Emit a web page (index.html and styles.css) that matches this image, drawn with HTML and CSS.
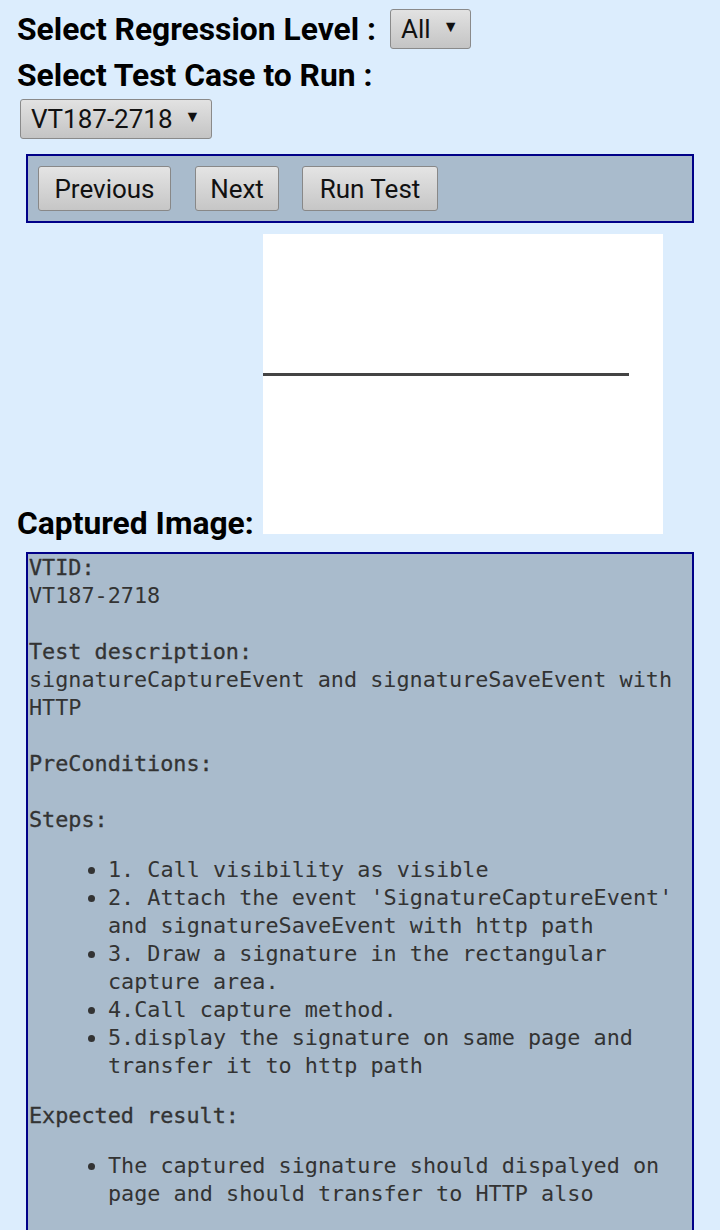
FILE: index.html
```html
<!DOCTYPE html>
<html>
<head>
<meta charset="utf-8">
<link rel="stylesheet" href="styles.css">
</head>
<body>
<div class="page">
  <div class="row-level">
    <span class="heading">Select Regression Level :</span>
    <span class="select select-all"><span>All</span><span class="arrow">▼</span></span>
  </div>
  <div class="heading heading-case">Select Test Case to Run :</div>
  <div class="select-row">
    <span class="select select-case"><span>VT187-2718</span><span class="arrow">▼</span></span>
  </div>
  <div class="panel">
    <span class="btn btn-prev">Previous</span>
    <span class="btn btn-next">Next</span>
    <span class="btn btn-run">Run Test</span>
  </div>
  <div class="capture-row">
    <span class="heading capture-label">Captured Image:</span>
    <div class="canvas"><div class="sig-line"></div></div>
  </div>
  <div class="info">
    <b>VTID:</b><br>
    VT187-2718<br>
    <br>
    <b>Test description:</b><br>
    signatureCaptureEvent and signatureSaveEvent with HTTP<br>
    <br>
    <b>PreConditions:</b><br>
    <br>
    <b>Steps:</b><br>
    <ul>
      <li>1. Call visibility as visible</li>
      <li>2. Attach the event 'SignatureCaptureEvent' and signatureSaveEvent with http path</li>
      <li>3. Draw a signature in the rectangular capture area.</li>
      <li>4.Call capture method.</li>
      <li>5.display the signature on same page and transfer it to http path</li>
    </ul>
    <b>Expected result:</b><br>
    <ul>
      <li>The captured signature should dispalyed on page and should transfer to HTTP also</li>
    </ul>
    <br>
  </div>
</div>
</body>
</html>
```

FILE: styles.css
```css
html, body {
  margin: 0;
  padding: 0;
  background: #dcedfd;
}
.page {
  padding: 0 0 0 17px;
  font-family: Roboto, "Liberation Sans", sans-serif;
  color: #000;
  height: 1230px;
  overflow: hidden;
}
.heading {
  font-weight: bold;
  font-size: 31.8px;
  line-height: 36px;
}
.row-level {
  display: flex;
  align-items: center;
  gap: 14px;
  padding-top: 9px;
  height: 40px;
}
.heading-case {
  margin-top: 6px;
  height: 40px;
  line-height: 40px;
}
.select-row {
  padding-left: 3px;
  margin-top: 4px;
}
.select {
  display: inline-flex;
  align-items: center;
  box-sizing: border-box;
  height: 40px;
  padding: 0 10px;
  gap: 12px;
  border: 1.5px solid #8a8a8a;
  border-radius: 3px;
  background: linear-gradient(#e2e2e2, #c4c4c4);
  font-size: 26px;
  color: #111;
}
.select-all { width: 81px; }
.select-case { width: 192px; }
.arrow {
  font-size: 16px;
  position: relative;
  top: -3px;
}
.panel {
  margin: 15px 26px 0 9px;
  box-sizing: border-box;
  height: 69px;
  border: 2px solid #000088;
  background: #a9bbcc;
  display: flex;
  align-items: center;
  padding-left: 10px;
  gap: 24px;
}
.btn {
  box-sizing: border-box;
  height: 45px;
  display: inline-flex;
  align-items: center;
  justify-content: center;
  border: 1.5px solid #888;
  border-radius: 3px;
  background: linear-gradient(#e4e4e4, #c6c6c6);
  font-size: 26px;
  color: #111;
}
.btn-prev { width: 133px; }
.btn-next { width: 84px; }
.btn-run { width: 136px; margin-left: -1px; }
.capture-row {
  display: flex;
  align-items: flex-end;
  margin-top: 11px;
  gap: 9px;
}
.capture-label {
  line-height: 30px;
  position: relative;
  top: 4px;
}
.canvas {
  width: 400px;
  height: 300px;
  background: #fff;
  position: relative;
}
.sig-line {
  position: absolute;
  left: 0;
  top: 139px;
  width: 366px;
  height: 3px;
  background: #444;
}
.info {
  margin: 18px 26px 0 9px;
  border: 2px solid #000088;
  border-bottom: none;
  background: #a9bbcc;
  padding: 0 1px;
  font-family: "DejaVu Sans Mono", "Liberation Mono", monospace;
  font-size: 21.8px;
  line-height: 28px;
  color: #333;
  min-height: 700px;
}
.info > *:first-child { }
.info b {
  font-weight: normal;
  -webkit-text-stroke: 0.3px #333;
}
.info ul {
  margin: 22px 0;
  padding-left: 79px;
}
```
